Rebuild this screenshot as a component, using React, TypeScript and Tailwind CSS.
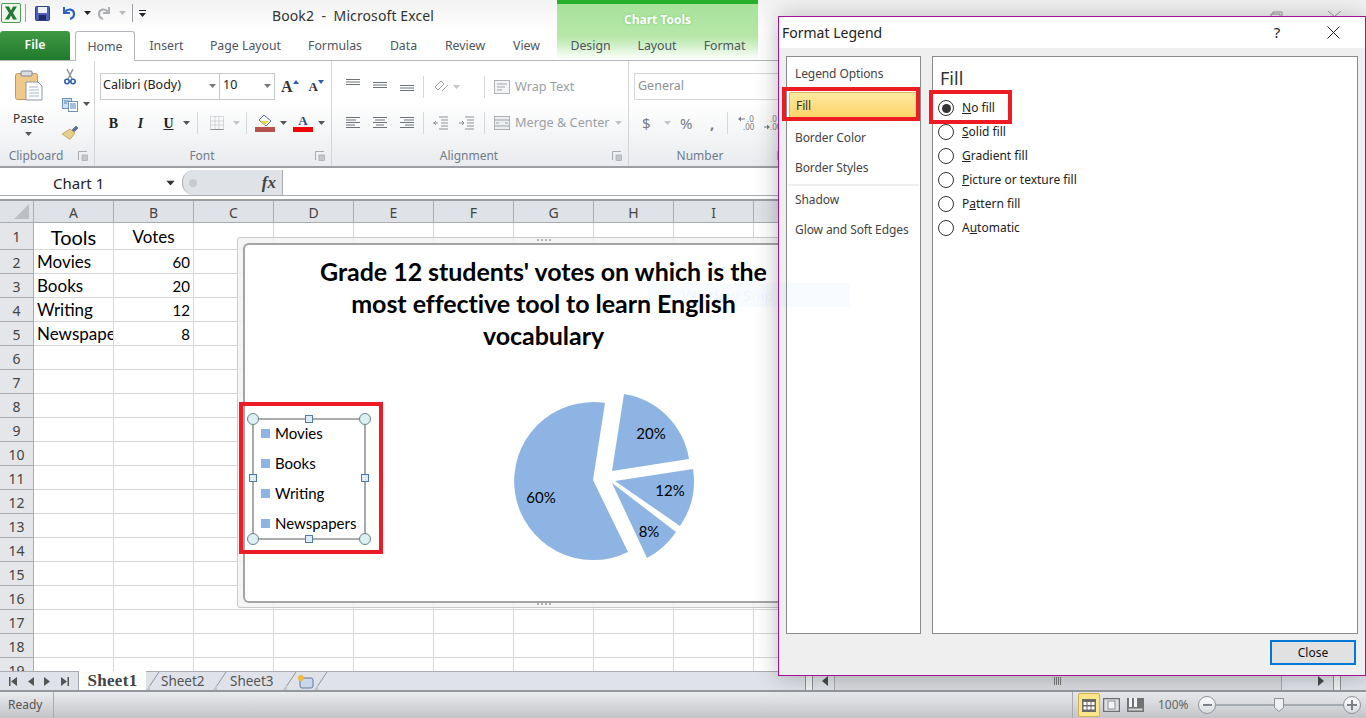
import { Fragment } from "react";

const ui = "font-['Noto_Sans',sans-serif]";

const columns = ["A", "B", "C", "D", "E", "F", "G", "H", "I", "J", "K", "L", "M", "N", "O", "P", "Q"];
const rows = Array.from({ length: 19 }, (_, i) => i + 1);

const cells: Record<string, { text: string; cls: string }> = {
  A1: { text: "Tools", cls: "justify-center text-[20px]" },
  B1: { text: "Votes", cls: "justify-center text-[17px]" },
  A2: { text: "Movies", cls: "pl-[3px] text-[17px]" },
  B2: { text: "60", cls: "justify-end pr-[3px]" },
  A3: { text: "Books", cls: "pl-[3px] text-[17px]" },
  B3: { text: "20", cls: "justify-end pr-[3px]" },
  A4: { text: "Writing", cls: "pl-[3px] text-[17px]" },
  B4: { text: "12", cls: "justify-end pr-[3px]" },
  A5: { text: "Newspapers", cls: "pl-[3px] text-[17px]" },
  B5: { text: "8", cls: "justify-end pr-[3px]" },
};

const tabs = [
  { label: "Insert", cls: "w-[63px]" },
  { label: "Page Layout", cls: "w-[95px]" },
  { label: "Formulas", cls: "w-[84px]" },
  { label: "Data", cls: "w-[53px]" },
  { label: "Review", cls: "w-[70px]" },
  { label: "View", cls: "w-[53px]" },
];

const contextTabs = [
  { label: "Design", cls: "w-[67px]" },
  { label: "Layout", cls: "w-[66px]" },
  { label: "Format", cls: "w-[69px]" },
];

const legendItems = ["Movies", "Books", "Writing", "Newspapers"];

const fillOptions = [
  { key: "N", rest: "o fill", pre: "", checked: true },
  { key: "S", rest: "olid fill", pre: "" },
  { key: "G", rest: "radient fill", pre: "" },
  { key: "P", rest: "icture or texture fill", pre: "" },
  { key: "a", rest: "ttern fill", pre: "P" },
  { key: "u", rest: "tomatic", pre: "A" },
];

function Caret({ color = "#555", className = "" }: { color?: string; className?: string }) {
  return (
    <svg width="7" height="4" viewBox="0 0 7 4" className={className}>
      <path d="M0 0h7L3.5 4z" fill={color} />
    </svg>
  );
}

function Lines({ rows, color = "#6d7278" }: { rows: [number, number][]; color?: string }) {
  return (
    <svg width="16" height="14" viewBox="0 0 16 14">
      {rows.map(([a, b], i) => (
        <path key={i} d={`M${a} ${1.5 + i * 2.5}H${b}`} stroke={color} strokeWidth="1" />
      ))}
    </svg>
  );
}

function Launcher() {
  return (
    <div className="w-[22px] flex justify-center">
      <svg width="10" height="10" viewBox="0 0 10 10">
        <path d="M.5 9V.5H9" stroke="#a8acb2" fill="none" />
        <rect x="4" y="4" width="5.5" height="5.5" fill="#c4c7cc" stroke="#9ba0a6" strokeWidth=".6" />
      </svg>
    </div>
  );
}

function Sep() {
  return <div className="w-px h-[22px] bg-[#d6d8dc]" />;
}

function GroupLabel({ text }: { text: string }) {
  return (
    <div className="h-[20px] mt-auto flex items-center text-[12px] text-[#6f7c8c]">
      <span className="flex-1 text-center">{text}</span>
      <Launcher />
    </div>
  );
}

function ExcelLogo() {
  return (
    <svg width="20" height="20" viewBox="0 0 20 20">
      <rect x=".5" y=".5" width="19" height="19" rx="1.5" fill="#eef6ea" stroke="#4f9a55" />
      <path d="M4 3.5h4l2 4 2-4h4l-4 6.5 4 6.5h-4l-2-4-2 4H4l4-6.5z" fill="#1f7a35" />
    </svg>
  );
}

function Paste() {
  return (
    <svg width="28" height="32" viewBox="0 0 28 32">
      <rect x=".5" y="3.5" width="22" height="26" rx="2" fill="#eec98a" stroke="#c09a5c" />
      <rect x="6" y="1" width="11" height="5" rx="1" fill="#d9dde3" stroke="#7d8795" />
      <path d="M11 12h12l4 4v14H11z" fill="#fff" stroke="#8d98a6" />
      <path d="M14 17h9M14 20h10M14 23h10M14 26h10" stroke="#a9b6c6" />
    </svg>
  );
}

function Scissors() {
  return (
    <svg width="12" height="16" viewBox="0 0 12 16">
      <path d="M3 0l5 10M9 0L4 10" stroke="#8a929c" strokeWidth="1.4" />
      <circle cx="3" cy="12.5" r="2.2" fill="none" stroke="#2f5fa8" strokeWidth="1.6" />
      <circle cx="9" cy="12.5" r="2.2" fill="none" stroke="#2f5fa8" strokeWidth="1.6" />
    </svg>
  );
}

function Copy() {
  return (
    <svg width="16" height="14" viewBox="0 0 16 14">
      <rect x=".5" y=".5" width="9" height="10" fill="#cfe2f5" stroke="#6f93bb" />
      <rect x="6.5" y="3.5" width="9" height="10" fill="#fff" stroke="#6f93bb" />
      <path d="M8 6h6M8 8h6M8 10h6M2 3h5M2 5h3" stroke="#4f80b5" />
    </svg>
  );
}

function Brush() {
  return (
    <svg width="17" height="15" viewBox="0 0 17 15">
      <path d="M10 5l4-4 2 2-4 4z" fill="#5a74a8" stroke="#3e5687" strokeWidth=".6" />
      <path d="M0 9l8-5 5 4-5 6.5z" fill="#e9cf85" stroke="#ad9450" strokeWidth=".7" />
    </svg>
  );
}

function Radio({ checked }: { checked?: boolean }) {
  return (
    <span className="w-4 h-4 rounded-full border border-[#333] bg-white flex items-center justify-center shrink-0">
      {checked && <span className="w-[9px] h-[9px] rounded-full bg-[#333]" />}
    </span>
  );
}

function TabSlant() {
  return (
    <svg width="14" height="19" viewBox="0 0 14 19" className="shrink-0">
      <path d="M1 18L13 0" stroke="#8f949b" fill="none" />
      <path d="M0 18l4-6v6z" fill="#c3c7cd" />
    </svg>
  );
}

function Grip({ pos }: { pos: string }) {
  return (
    <svg width="14" height="3" viewBox="0 0 14 3" className={`absolute ${pos}`}>
      <path d="M0 0h2v2H0zM4 0h2v2H4zM8 0h2v2H8zM12 0h2v2h-2z" fill="#b4b4b4" />
    </svg>
  );
}

function Handle({ pos, round }: { pos: string; round?: boolean }) {
  return round ? (
    <span className={`absolute w-3 h-3 rounded-full bg-[#dcf0f2] border border-[#68858f] ${pos}`} />
  ) : (
    <span className={`absolute w-2 h-2 bg-[#dcecf6] border border-[#4f7ba6] ${pos}`} />
  );
}

function Chart() {
  return (
    <div className="absolute left-[237px] top-[237px] w-[620px] h-[371px] bg-[#f2f2f2]/80 border border-[#c9c9c9] rounded-[3px] pt-[5px] pl-[5px] pb-[4px]">
      <Grip pos="left-[299px] top-[1px]" />
      <Grip pos="left-[299px] bottom-[1px]" />
      <div className="relative w-full h-full bg-white border-t-2 border-l-2 border-b-2 border-[#a4a4a4] rounded-tl-[6px] rounded-bl-[6px]">
        <div className="pt-[10px] text-center font-['Lato',sans-serif] font-bold text-[25px] tracking-[-0.05px] leading-[32px] text-black w-[597px]">
          Grade 12 students' votes on which is the
          <br />
          most effective tool to learn English
          <br />
          vocabulary
        </div>

        <div className="absolute left-[7px] top-[173px] w-[114px] h-[122px] border-2 border-[#a9abad] font-['Lato',sans-serif] text-[15px] text-black">
          <div className="-mt-[2px]">
            {legendItems.map((item) => (
              <div key={item} className="h-[30px] flex items-center gap-[5px] pl-[7px]">
                <span className="w-[9px] h-[9px] bg-[#8eb4e3]" />
                {item}
              </div>
            ))}
          </div>
          <Handle round pos="-left-[7px] -top-[7px]" />
          <Handle round pos="-right-[7px] -top-[7px]" />
          <Handle round pos="-left-[7px] -bottom-[7px]" />
          <Handle round pos="-right-[7px] -bottom-[7px]" />
          <Handle pos="left-[51px] -top-[5px]" />
          <Handle pos="left-[51px] -bottom-[5px]" />
          <Handle pos="-left-[5px] top-[54px]" />
          <Handle pos="-right-[5px] top-[54px]" />
        </div>
        <div className="absolute -left-[6px] top-[157px] w-[144px] h-[152px] border-4 border-[#ed1c24]" />

        <svg
          viewBox="500 385 200 180"
          width="200"
          height="180"
          className="absolute left-[255px] top-[140px] font-['Lato',sans-serif]"
        >
          <g fill="#8eb4e3">
            <path d="M593 480L605 403A79 79 0 1 0 628 552Z" />
            <path d="M612 471L624 394A78 78 0 0 1 689 459Z" />
            <path d="M615 481L693 469A79 79 0 0 1 680 526Z" />
            <path d="M612 483L676 532A81 81 0 0 1 647 558Z" />
          </g>
          <g fontSize="15" textAnchor="middle" fill="#000">
            <text x="541" y="503">60%</text>
            <text x="651" y="439">20%</text>
            <text x="670" y="496">12%</text>
            <text x="649" y="537">8%</text>
          </g>
        </svg>
      </div>
    </div>
  );
}

function Dialog() {
  return (
    <div className={`absolute left-[778px] top-[16px] w-[588px] h-[660px] bg-[#efefef] border border-[#a6119b] shadow-[0_0_22px_rgba(0,0,0,0.28)] flex flex-col ${ui}`}>
      <div className="h-[31px] bg-white flex items-center pl-[3px] text-[14px] text-[#222]">
        <span className="flex-1">Format Legend</span>
        <span className="w-[16px] text-center text-[15px]">?</span>
        <svg width="13" height="13" viewBox="0 0 13 13" className="ml-[42px] mr-[25px]">
          <path d="M.5.5l12 12M12.5.5l-12 12" stroke="#222" />
        </svg>
      </div>
      <div className="flex-1 flex flex-col pl-[7px] pr-[7px] pt-[8px]">
        <div className="flex gap-[11px] h-[578px]">
          <div className="w-[135px] bg-white border border-[#898b8f] pt-[1px] text-[12px] text-[#444] tracking-[-0.1px]">
            <div className="h-[32px] flex items-center pl-[8px]">Legend Options</div>
            <div className="h-[32px] flex items-center px-[2px]">
              <div className="w-full h-[28px] flex items-center pl-[6px] text-[#333] bg-linear-to-b from-[#fde9a0] to-[#fdd264] border border-[#dcb660] rounded-[2px]">
                Fill
              </div>
            </div>
            <div className="h-[32px] flex items-center pl-[8px]">Border Color</div>
            <div className="h-[28px] flex items-center pl-[8px]">Border Styles</div>
            <div className="h-[4px] mx-[1px] flex items-end">
              <div className="w-full h-[2px] bg-[#efeff2]" />
            </div>
            <div className="h-[28px] flex items-center pl-[8px]">Shadow</div>
            <div className="h-[32px] flex items-center pl-[8px]">Glow and Soft Edges</div>
          </div>
          <div className="flex-1 bg-white border border-[#898b8f] pl-[5px] pt-[9px] text-[12px] text-[#222]">
            <div className="h-[24px] text-[18px] leading-[24px] text-[#333] pl-[2px]">Fill</div>
            <div className="mt-[6px]">
              {fillOptions.map((o) => (
                <div key={o.key + o.rest} className="h-[24px] flex items-center gap-2">
                  <Radio checked={o.checked} />
                  <span>
                    {o.pre}
                    <span className="underline">{o.key}</span>
                    {o.rest}
                  </span>
                </div>
              ))}
            </div>
          </div>
        </div>
        <div className="flex justify-end mt-[6px]">
          <button className="w-[86px] h-[25px] mr-[2px] bg-[#e1e1e1] border-2 border-[#0078d7] text-[12px] text-[#111]">
            Close
          </button>
        </div>
      </div>
      <div className="absolute left-[3px] top-[70px] w-[138px] h-[34px] border-[4px] border-[#ed1c24]" />
      <div className="absolute left-[150px] top-[73px] w-[83px] h-[34px] border-[4px] border-[#ed1c24]" />
    </div>
  );
}

export default function App() {
  return (
    <div className={`relative w-[1366px] h-[718px] overflow-hidden bg-white flex flex-col text-[#333] ${ui}`}>
      {/* title bar */}
      <div className="h-[30px] shrink-0 flex items-start pt-[3px] relative bg-linear-to-b from-[#f2f2f2] to-white">
        <div className="ml-[1px] flex items-center">
          <ExcelLogo />
          <div className="w-px h-[18px] bg-[#9ca0a6] ml-[4px]" />
          <svg width="15" height="15" viewBox="0 0 15 15" className="ml-[9px]">
            <rect x=".5" y=".5" width="14" height="14" rx="1" fill="#4f61b6" stroke="#303f8c" />
            <rect x="3" y="1" width="9" height="6" fill="#eef1fb" />
            <rect x="4" y="9" width="7" height="5" fill="#1f2a66" />
          </svg>
          <svg width="15" height="14" viewBox="0 0 15 14" className="ml-[12px]">
            <path d="M2 1v6h6" fill="none" stroke="#2a63b8" strokeWidth="2" />
            <path d="M3 6c3-4 9-3 9 2 0 2-1 4-4 5" fill="none" stroke="#2a63b8" strokeWidth="2.2" />
          </svg>
          <Caret color="#222" className="ml-[7px]" />
          <svg width="14" height="14" viewBox="0 0 14 14" className="ml-[6px]">
            <path d="M12 1v6H6" fill="none" stroke="#adb1b6" strokeWidth="2" />
            <path d="M11 6C8 2 2 3 2 8c0 2 1 4 4 5" fill="none" stroke="#adb1b6" strokeWidth="2.2" />
          </svg>
          <Caret color="#b5b8bc" className="ml-[8px]" />
          <div className="w-px h-[18px] bg-[#9ca0a6] ml-[6px]" />
          <svg width="7" height="7" viewBox="0 0 7 7" className="ml-[6px]">
            <path d="M0 0h7v1H0zM0 3h7L3.5 7z" fill="#222" />
          </svg>
        </div>
        <div className="absolute left-[272px] top-[5px] text-[14px] text-[#333] whitespace-pre tracking-[0.1px]">Book2  -  Microsoft Excel</div>
        <div className="absolute left-[557px] top-0 w-[201px] h-[60px] border-t-4 border-[#27b12a] bg-linear-to-b from-[#a7e29a] via-[#b8e8ab] via-60% to-white">
          <div className="text-center text-white font-bold text-[12px] pt-[7px] [text-shadow:0_0_3px_#7cc56d]">Chart Tools</div>
        </div>
        <svg width="80" height="6" viewBox="0 0 80 6" className="absolute left-[1268px] top-[11px]">
          <path d="M3 6V3h9v3M5 3V1h9v4" fill="none" stroke="#9a9a9a" />
          <path d="M60 0l6 5M73 0l-6 5" stroke="#9a9a9a" />
        </svg>
      </div>

      {/* tabs */}
      <div className="h-[31px] shrink-0 flex items-end relative border-b border-[#b4b7bb] text-[12.3px] text-[#4e5560]">
        <div className="w-[70px] h-[29px] rounded-t-[3px] bg-linear-to-b from-[#3f9a44] to-[#1f7a2c] text-white font-semibold flex items-center justify-center">File</div>
        <div className="w-[60px] h-[30px] -mb-px ml-[5px] pt-[1px] bg-white border border-b-0 border-[#b4b7bb] rounded-t-[3px] flex items-center justify-center">Home</div>
        {tabs.map((t) => (
          <div key={t.label} className={`h-[29px] pt-[2px] flex items-center justify-center ${t.cls}`}>{t.label}</div>
        ))}
        <div className="w-[4px]" />
        {contextTabs.map((t) => (
          <div key={t.label} className={`h-[29px] pt-[2px] flex items-center justify-center ${t.cls}`}>{t.label}</div>
        ))}
      </div>

      {/* ribbon */}
      <div className="h-[107px] shrink-0 flex border-b-2 border-[#9b9ea3] bg-linear-to-b from-white via-white via-40% to-[#e9ebee]">
        <div className="w-[95px] flex flex-col border-r border-[#d3d5d9]">
          <div className="flex">
            <div className="w-[57px] flex flex-col items-center pt-[9px]">
              <Paste />
              <span className="mt-[9px] text-[12px] leading-[16px]">Paste</span>
              <Caret className="mt-[5px]" />
            </div>
            <div className="w-[28px] ml-[-1px] flex flex-col items-center pt-[8px] gap-[13px]">
              <Scissors />
              <div className="relative">
                <Copy />
                <Caret className="absolute -right-[12px] top-[4px]" />
              </div>
              <Brush />
            </div>
          </div>
          <GroupLabel text="Clipboard" />
        </div>

        <div className="w-[237px] flex flex-col border-r border-[#d3d5d9]">
          <div className="flex items-center pl-[5px] pt-[12px]">
            <div className="w-[120px] h-[27px] bg-white border border-[#c6c9ce] flex items-center justify-between pl-[2px] pr-[3px] pb-[2px] text-[12.5px] text-[#222]">
              Calibri (Body)
              <Caret color="#777" />
            </div>
            <div className="w-[55px] h-[27px] bg-white border border-l-0 border-[#c6c9ce] flex items-center justify-between px-[3px] pb-[2px] text-[12.5px] text-[#222]">
              10
              <Caret color="#777" />
            </div>
            <span className="ml-[6px] font-['Liberation_Serif',serif] font-bold text-[16px] text-[#333]">A</span>
            <svg width="6" height="4" viewBox="0 0 6 4" className="mb-[10px]"><path d="M0 4l3-4 3 4z" fill="#2a5ea8" /></svg>
            <span className="ml-[10px] font-['Liberation_Serif',serif] font-bold text-[13px] text-[#333]">A</span>
            <svg width="6" height="4" viewBox="0 0 6 4" className="mb-[10px]"><path d="M0 0h6L3 4z" fill="#2a5ea8" /></svg>
          </div>
          <div className="flex items-center pl-[5px] mt-[11px] h-[24px] font-['Liberation_Serif',serif] text-[14px] text-[#222]">
            <span className="w-[27px] text-center font-bold">B</span>
            <span className="w-[27px] text-center italic font-bold">I</span>
            <span className="w-[29px] text-center underline font-bold">U</span>
            <Caret />
            <div className="ml-[7px]"><Sep /></div>
            <svg width="14" height="14" viewBox="0 0 14 14" className="ml-[12px]">
              <path d="M.5.5h13v13H.5zM5 .5v13M9 .5v13M.5 5h13M.5 9h13" fill="none" stroke="#b4b7bc" strokeDasharray="1 1" />
              <path d="M.5 13.5h13" stroke="#8d9196" />
            </svg>
            <Caret color="#c2c4c8" className="ml-[9px]" />
            <div className="ml-[6px]"><Sep /></div>
            <div className="ml-[8px] w-[20px] flex flex-col items-center">
              <svg width="16" height="12" viewBox="0 0 16 12">
                <path d="M7 0l7 6-5 5-7-6z" fill="#fff" stroke="#4c6fa5" />
                <path d="M3 6h9l-4 4z" fill="#f2d43c" />
              </svg>
              <div className="w-[20px] h-[5px] bg-[#b8504c]" />
            </div>
            <Caret className="ml-[5px]" />
            <div className="ml-[6px] w-[20px] flex flex-col items-center">
              <span className="text-[13px] leading-[12px] font-bold text-[#2d4a86]">A</span>
              <div className="w-[20px] h-[5px] bg-[#f00000]" />
            </div>
            <Caret className="ml-[5px]" />
          </div>
          <GroupLabel text="Font" />
        </div>

        <div className="w-[297px] flex flex-col border-r border-[#d3d5d9]">
          <div className="flex items-center pl-[13px] h-[27px] mt-[12px]">
            <div className="w-[27px] -translate-y-[2px]"><Lines rows={[[1, 15], [1, 15], [1, 15]]} /></div>
            <div className="w-[27px] translate-y-[1px]"><Lines rows={[[1, 15], [1, 15], [1, 15]]} /></div>
            <div className="w-[24px] translate-y-[4px]"><Lines rows={[[1, 15], [1, 15], [1, 15]]} /></div>
            <Sep />
            <svg width="16" height="16" viewBox="0 0 16 16" className="ml-[9px]">
              <path d="M2 8l6-6 3 3-6 6zM9 12l6-6" fill="none" stroke="#9ea3a9" />
            </svg>
            <Caret color="#c2c4c8" className="ml-[4px]" />
            <div className="ml-[24px]"><Sep /></div>
            <svg width="16" height="14" viewBox="0 0 16 14" className="ml-[9px]">
              <rect x=".5" y=".5" width="15" height="13" fill="#f3f4f6" stroke="#aeb2b7" />
              <path d="M3 4h10M3 7h8M3 10h5" stroke="#a1a5ab" />
            </svg>
            <span className="ml-[5px] text-[12.7px] text-[#9ba0a7]">Wrap Text</span>
          </div>
          <div className="flex items-center pl-[13px] h-[24px] mt-[11px]">
            <div className="w-[27px]"><Lines rows={[[1, 15], [1, 11], [1, 15], [1, 10], [1, 15]]} /></div>
            <div className="w-[27px]"><Lines rows={[[1, 15], [3, 13], [1, 15], [4, 12], [1, 15]]} /></div>
            <div className="w-[24px]"><Lines rows={[[1, 15], [5, 15], [1, 15], [6, 15], [1, 15]]} /></div>
            <Sep />
            <svg width="16" height="14" viewBox="0 0 16 14" className="ml-[9px]">
              <path d="M6 1h9M8 4h7M8 7h7M8 10h7M6 13h9M5 7H0M3 5L1 7l2 2" fill="none" stroke="#8b9096" />
            </svg>
            <svg width="16" height="14" viewBox="0 0 16 14" className="ml-[10px]">
              <path d="M6 1h9M8 4h7M8 7h7M8 10h7M6 13h9M0 7h5M3 5l2 2-2 2" fill="none" stroke="#8b9096" />
            </svg>
            <div className="ml-[9px]"><Sep /></div>
            <svg width="16" height="14" viewBox="0 0 16 14" className="ml-[9px]">
              <rect x=".5" y=".5" width="15" height="13" fill="#eceef0" stroke="#aeb2b7" />
              <path d="M.5 4h15M.5 10h15M2 7h3M11 7h3" stroke="#9da1a7" />
            </svg>
            <span className="ml-[5px] text-[12.7px] text-[#9ba0a7]">Merge &amp; Center</span>
            <Caret color="#c2c4c8" className="ml-[5px]" />
          </div>
          <GroupLabel text="Alignment" />
        </div>

        <div className="w-[164px] flex flex-col">
          <div className="ml-[5px] mt-[12px] h-[27px] bg-white border border-[#d5d7da] flex items-center pl-[3px] text-[12.5px] text-[#8d929a]">General</div>
          <div className="flex items-center h-[24px] mt-[11px] pl-[13px] text-[15px] text-[#777d84]">
            <span className="w-[22px]">$</span>
            <Caret color="#c2c4c8" />
            <span className="ml-[9px] w-[30px]">%</span>
            <span className="w-[17px] font-bold">,</span>
            <Sep />
            <svg width="18" height="16" viewBox="0 0 18 16" className="ml-[10px]" fill="#777d84" fontSize="8">
              <path d="M0 4l3-2.500v2h4v1H3v2z" />
              <text x="9" y="7">.0</text>
              <text x="5" y="15">.00</text>
            </svg>
            <svg width="18" height="16" viewBox="0 0 18 16" className="ml-[8px]" fill="#777d84" fontSize="8">
              <text x="6" y="7">.0</text>
              <text x="6" y="15">.00</text>
              <path d="M6 12l-3-2.500v2H0v1h3v2z" />
            </svg>
          </div>
          <GroupLabel text="Number" />
        </div>
      </div>

      {/* formula bar */}
      <div className="h-[31px] shrink-0 pt-[2px] relative">
        <div className="h-[26px] flex items-center border-b border-[#a8abb0]">
          <div className="w-[175px] pl-[53px] pt-[1px] text-[15px] text-[#222] flex items-center justify-between">
            Chart 1
            <Caret color="#333" className="scale-125 mr-[1px]" />
          </div>
          <div className="ml-[7px] w-[101px] h-[25px] bg-[#dfe2e7] border-l border-r border-[#a8abb0] rounded-l-[12px] flex items-center justify-between pl-[6px] pr-[6px]">
            <span className="w-[8px] h-[8px] rounded-full bg-[#c8cbd0]" />
            <span className="font-['Liberation_Serif',serif] italic font-bold text-[17px] text-[#444]">fx</span>
          </div>
        </div>
      </div>

      {/* sheet */}
      <div className="flex-1 min-h-0 overflow-hidden border-t-2 border-[#9b9ea3] font-['Lato',sans-serif] text-[15px] text-black">
        <div className="grid grid-cols-[34px_repeat(17,80px)] grid-rows-[22px_27px] auto-rows-[24px]">
          <div className="bg-[#dfe2e7] border-r border-b border-[#a8abb0] flex items-end justify-end pr-[4px] pb-[3px]">
            <svg width="15" height="15" viewBox="0 0 15 15"><path d="M15 0v15H0z" fill="#bcc0c5" /></svg>
          </div>
          {columns.map((c) => (
            <div key={c} className={`bg-[#dfe2e7] pt-[1px] border-r border-b border-[#a8abb0] flex items-center justify-center text-[14px] text-[#444] ${ui}`}>{c}</div>
          ))}
          {rows.map((r) => (
            <Fragment key={r}>
              <div className={`bg-[#e4e6ea] pt-[1px] border-r border-b border-[#a8abb0] flex items-center justify-center text-[14px] text-[#444] ${ui}`}>{r}</div>
              {columns.map((c) => {
                const cell = cells[c + r];
                return (
                  <div key={c} className={`pt-[1px] border-r border-b border-[#d6d6d6] flex items-center overflow-hidden whitespace-nowrap ${cell ? cell.cls : ""}`}>
                    {cell?.text}
                  </div>
                );
              })}
            </Fragment>
          ))}
        </div>
      </div>

      {/* sheet tabs */}
      <div className="h-[21px] shrink-0 flex items-stretch bg-[#dfe2e8] border-t border-[#a8abb0] border-b-2 border-b-[#94979c] text-[13.5px] text-[#555]">
        <div className="w-[79px] flex items-center justify-around px-[4px] border-r border-[#a8abb0]">
          <svg width="8" height="9" viewBox="0 0 8 9"><path d="M0 0h1.500v9H0zM8 0v9L2 4.500z" fill="#555" /></svg>
          <svg width="6" height="9" viewBox="0 0 6 9"><path d="M6 0v9L0 4.500z" fill="#555" /></svg>
          <svg width="6" height="9" viewBox="0 0 6 9"><path d="M0 0v9l6-4.500z" fill="#555" /></svg>
          <svg width="8" height="9" viewBox="0 0 8 9"><path d="M8 0H6.500v9H8zM0 0v9l6-4.500z" fill="#555" /></svg>
        </div>
        <div className="w-[67px] -mt-px bg-white flex items-center justify-center font-['Liberation_Serif',serif] font-bold text-[17px] tracking-[0.3px] text-[#444]">Sheet1</div>
        <TabSlant />
        <div className="w-[53px] flex items-center pl-[1px]">Sheet2</div>
        <TabSlant />
        <div className="w-[56px] flex items-center pl-[3px]">Sheet3</div>
        <TabSlant />
        <svg width="17" height="15" viewBox="0 0 17 15" className="self-center shrink-0">
          <rect x="3" y="4" width="13" height="10" rx="2" fill="#c9d8ea" stroke="#5f7a9c" />
          <circle cx="4" cy="4" r="3" fill="#f6b73c" />
        </svg>
        <TabSlant />
        <div className="w-[477px]" />
        <div className="w-[8px] bg-[#f1f2f4] border-x border-[#8f9297]" />
        <div className="w-[20px] ml-[2px] flex items-center justify-center border-r border-[#a8abb0]">
          <svg width="6" height="10" viewBox="0 0 6 10"><path d="M6 0v10L0 5z" fill="#4a4a4a" /></svg>
        </div>
        <div className="w-[446px] bg-[#d9dbdf] flex items-center justify-center">
          <svg width="8" height="8" viewBox="0 0 8 8"><path d="M.5 0v8M2.500 0v8M4.500 0v8M6.500 0v8" stroke="#777" /></svg>
        </div>
        <div className="w-[52px] flex items-center justify-end pr-[9px] border-l border-[#a8abb0]">
          <svg width="6" height="10" viewBox="0 0 6 10"><path d="M0 0v10l6-5z" fill="#4a4a4a" /></svg>
        </div>
        <div className="w-[8px] bg-[#f1f2f4] border-x border-[#8f9297]" />
      </div>

      {/* status bar */}
      <div className="h-[26px] shrink-0 flex items-center pr-[5px] bg-linear-to-b from-[#e9ebee] to-[#c2c4c8] text-[12px] text-[#555]">
        <span className="ml-[8px] w-[45px]">Ready</span>
        <div className="w-px h-[26px] bg-[#a8abb0]" />
        <div className="flex-1" />
        <div className="w-px h-[26px] bg-[#a8abb0]" />
        <div className="ml-[5px] w-[22px] h-[24px] bg-[#fde78c] border border-[#d9b04f] rounded-[2px] flex items-center justify-center">
          <svg width="14" height="13" viewBox="0 0 14 13">
            <path d="M0 0h14v13H0z" fill="#6a6a6a" />
            <path d="M1.500 3h3v3h-3zM5.500 3h3v3h-3zM9.500 3h3v3h-3zM1.500 7.500h3v3h-3zM5.500 7.500h3v3h-3zM9.500 7.500h3v3h-3z" fill="#fff" />
          </svg>
        </div>
        <svg width="17" height="14" viewBox="0 0 17 14" className="ml-[3px]">
          <rect x=".5" y=".5" width="16" height="13" fill="#dde0e4" stroke="#6e6e6e" strokeWidth="1.500" />
          <rect x="5" y="3" width="7" height="8" fill="#f3f4f5" stroke="#8d8d8d" />
        </svg>
        <svg width="17" height="14" viewBox="0 0 17 14" className="ml-[7px]">
          <path d="M0 0h17v14H0z" fill="#737373" />
          <path d="M2 0h3v9H2zM7 0h3v9H7z" fill="#f3f4f5" />
          <path d="M1.500 10.500h14v2h-14z" fill="#d3d5d9" />
        </svg>
        <span className="ml-[14px] w-[40px] text-[#666]">100%</span>
        <div className="w-[18px] h-[18px] rounded-full bg-linear-to-b from-white to-[#d8dadd] border border-[#8f959c] flex items-center justify-center">
          <div className="w-[9px] h-[2px] bg-[#7b828a]" />
        </div>
        <div className="w-[127px] h-[2px] bg-[#a6abb2] relative">
          <svg width="10" height="14" viewBox="0 0 10 14" className="absolute left-[58px] -top-[6px]">
            <path d="M.5.5h9v9L5 13.500.5 9.500z" fill="#eef0f2" stroke="#8b9097" />
          </svg>
        </div>
        <div className="w-[18px] h-[18px] rounded-full bg-linear-to-b from-white to-[#d8dadd] border border-[#8f959c] flex items-center justify-center relative">
          <div className="w-[10px] h-[2px] bg-[#7b828a]" />
          <div className="absolute w-[2px] h-[10px] bg-[#7b828a]" />
        </div>
      </div>

      <Chart />
      <Dialog />

      {/* faint snip toolbar fading over the window */}
      <div className="absolute left-[648px] top-[283px] w-[202px] h-[24px] bg-[#3b82f6]/[0.035] flex items-center pl-[34px] text-[15px] text-[#000]/[0.035] pointer-events-none">
        Window Snip
      </div>
    </div>
  );
}
